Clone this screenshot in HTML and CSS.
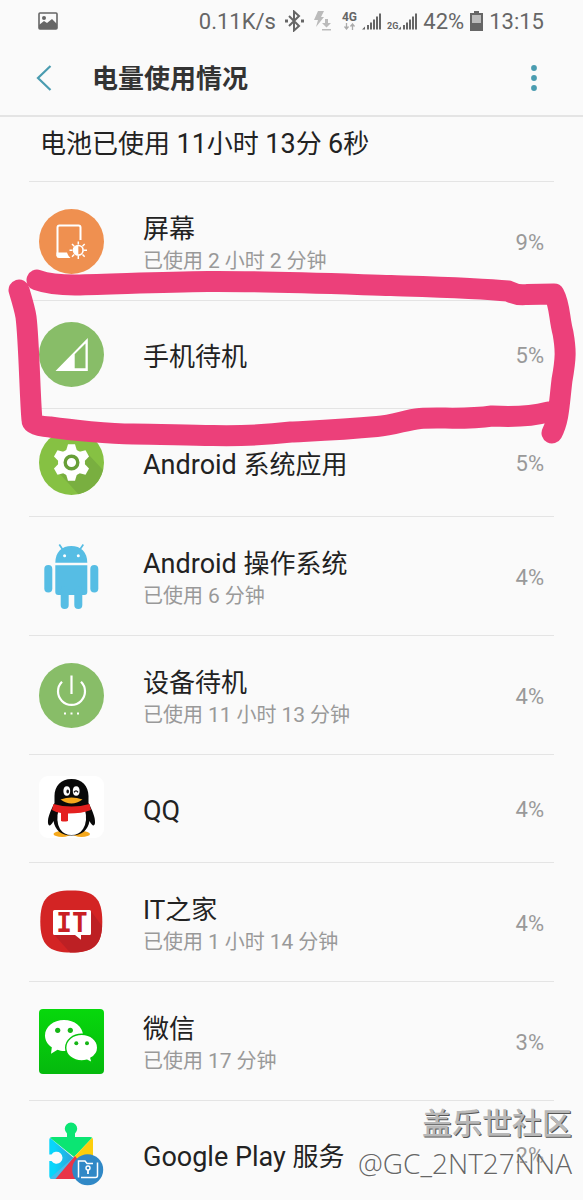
FILE: index.html
```html
<!DOCTYPE html>
<html lang="zh-CN">
<head>
<meta charset="utf-8">
<meta name="viewport" content="width=device-width, initial-scale=1">
<title>电量使用情况</title>
<link rel="stylesheet" href="styles.css">
</head>
<body>
<div class="screen">
  <div class="status">
    <svg class="status-photo" width="20" height="18" viewBox="0 0 20 18" aria-hidden="true"><rect x="1" y="1" width="18" height="16" rx="1" fill="none" stroke="#666" stroke-width="1.6"/><path d="M1 16V13L6 9 9 11 14 7 19 12V17H1Z" fill="#666"/><circle cx="6" cy="6" r="2" fill="#666"/></svg>
    <span class="status-text">0.11K/s</span>
    <svg class="status-bt" width="20" height="22" viewBox="0 0 20 22" aria-hidden="true"><path d="M5 6 15 16 10 20.500V1.500L15 6 5 16" fill="none" stroke="#666" stroke-width="2"/><path d="M1 9.500h3v3H1zM17 9.500h3v3h-3z" fill="#666"/></svg>
    <svg class="status-data" width="18" height="20" viewBox="0 0 18 20" aria-hidden="true"><path d="M4 0H10L7 6H10L2 16 4 9H0Z" fill="#bbb"/><path d="M11 8h3v4h3l-4.500 4.500L8 12h3zM8 18h9v1.500H8z" fill="#bbb"/></svg>
    <span class="net"><span class="net-label">4G</span><svg width="12" height="7" viewBox="0 0 12 7" aria-hidden="true"><path d="M2.500 0v6M.5 3.500l2 2.500 2-2.500M8.500 7V1M6.500 3.500l2-2.500 2 2.500" fill="none" stroke="#aaa" stroke-width="1.300"/></svg></span>
    <svg class="signal" width="20" height="18" viewBox="0 0 20 18" aria-hidden="true"><path d="M0 17.500 3 14.500V17.500ZM5 13h2v4.500H5zM8 10.500h2v7H8zM11 7.500h2v10h-2zM14 4.500h2v13h-2zM17 1.500h2v16h-2z" fill="#666"/></svg>
    <span class="net-small">2G</span>
    <svg class="signal-b" width="20" height="18" viewBox="0 0 20 18" aria-hidden="true"><path d="M0 17.500 3 14.500V17.500ZM5 13h2v4.500H5zM8 10.500h2v7H8zM11 7.500h2v10h-2zM14 4.500h2v13h-2zM17 1.500h2v16h-2z" fill="#666"/></svg>
    <span class="status-text">42%</span>
    <svg class="battery" width="13" height="20" viewBox="0 0 13 20" aria-hidden="true"><path d="M4 0h5v2h4v18H0V2h4z" fill="#666"/><path d="M2 4h9v8H2z" fill="#bbb"/></svg>
    <span class="status-text">13:15</span>
  </div>
  <header class="bar">
    <button class="back" type="button" aria-label="返回"><svg width="16" height="26" viewBox="0 0 16 26"><path d="M14.500 1 2 13 14.500 25" fill="none" stroke="#4a9cb0" stroke-width="2.200"/></svg></button>
    <h1 class="bar-title">电量使用情况</h1>
    <button class="more" type="button" aria-label="更多选项"><svg width="6" height="26" viewBox="0 0 6 26" fill="#4a9cb0"><circle cx="3" cy="3" r="2.900"/><circle cx="3" cy="13" r="2.900"/><circle cx="3" cy="23" r="2.900"/></svg></button>
  </header>
  <p class="summary">电池已使用 <span class="latin">11</span>小时 <span class="latin">13</span>分 <span class="latin">6</span>秒</p>
  <ul class="list">
    <li class="row row-tall">
      <svg class="icon" viewBox="0 0 65 65" aria-hidden="true"><circle cx="32.500" cy="32.500" r="32.500" fill="#ef9050"/><path d="M41.500 31V18.500a2 2 0 0 0-2-2H20.500a2 2 0 0 0-2 2V47" fill="none" stroke="#fff" stroke-width="2"/><path d="M17.500 43.500H28Q29 47 31.500 49H20a2.500 2.500 0 0 1-2.500-2.500Z" fill="#fff"/><circle cx="39.300" cy="41.300" r="4.800" fill="none" stroke="#fff" stroke-width="1.700"/><path d="M39.300 36.500a4.800 4.800 0 0 0 0 9.600Z" fill="#fff"/><path d="M39.300 32.500v3M39.300 47v3M30.500 41.300h3M45 41.300h3M33 35l2.200 2.200M43.500 45.500l2.200 2.200M45.700 35l-2.200 2.200M35.200 45.500 33 47.700" stroke="#fff" stroke-width="1.500"/></svg>
      <div class="info"><span class="name">屏幕</span><span class="used">已使用 <span class="num">2</span> 小时 <span class="num">2</span> 分钟</span></div><span class="pct">9%</span>
    </li>
    <li class="row">
      <svg class="icon" viewBox="0 0 65 65" aria-hidden="true"><circle cx="32.500" cy="32.500" r="32.500" fill="#88bd68"/><path fill-rule="evenodd" d="M16.500 49 48.800 16V49ZM35.700 32.300V46.300H46.500V21.500Z" fill="#fff"/></svg>
      <div class="info"><span class="name">手机待机</span></div><span class="pct">5%</span>
    </li>
    <li class="row">
      <svg class="icon" viewBox="0 0 65 65" aria-hidden="true"><circle cx="32.500" cy="32.500" r="32.500" fill="#86c143"/><path d="M20 43 39.500 64.200A32.500 32.500 0 0 0 64 40L49 24Z" fill="#79af40"/><g fill="#fff"><circle cx="32.500" cy="32.500" r="13.500"/><path id="tooth" d="M27 21 29 14.300H36L38 21Z"/><use href="#tooth" transform="rotate(60 32.500 32.500)"/><use href="#tooth" transform="rotate(120 32.500 32.500)"/><use href="#tooth" transform="rotate(180 32.500 32.500)"/><use href="#tooth" transform="rotate(240 32.500 32.500)"/><use href="#tooth" transform="rotate(300 32.500 32.500)"/></g><circle cx="32.500" cy="32.500" r="6.300" fill="none" stroke="#689f38" stroke-width="3.400"/></svg>
      <div class="info"><span class="name"><span class="latin">Android </span>系统应用</span></div><span class="pct">5%</span>
    </li>
    <li class="row row-tall">
      <svg class="icon" viewBox="0 0 65 65" fill="#56bde4" aria-hidden="true"><path d="M16.300 18.700C16.300 8 23 2 32.300 2s16 6 16 16.700Z"/><path d="M20.300.500 24 6M44.300.500 40.600 6" stroke="#56bde4" stroke-width="1.700"/><path d="M16.300 21.300h32V48a3 3 0 0 1-3 3h-26a3 3 0 0 1-3-3Z"/><rect x="5.300" y="21" width="8" height="27.500" rx="4"/><rect x="51.300" y="21" width="8" height="27.500" rx="4"/><rect x="21.700" y="42" width="8" height="23" rx="4"/><rect x="35.300" y="42" width="8" height="23" rx="4"/><circle cx="25.600" cy="11.700" r="1.500" fill="#fff"/><circle cx="39.300" cy="11.700" r="1.500" fill="#fff"/></svg>
      <div class="info"><span class="name"><span class="latin">Android </span>操作系统</span><span class="used">已使用 <span class="num">6</span> 分钟</span></div><span class="pct">4%</span>
    </li>
    <li class="row row-tall">
      <svg class="icon" viewBox="0 0 65 65" aria-hidden="true"><circle cx="32.500" cy="32.500" r="32.500" fill="#88bd68"/><path d="M23 18.800a13.500 13.500 0 1 0 19 0M32.500 12.500V31" fill="none" stroke="#fff" stroke-width="2.200"/><path d="M25 49.500h2v2h-2zM31.500 49.500h2v2h-2zM38 49.500h2v2h-2z" fill="#fff"/></svg>
      <div class="info"><span class="name">设备待机</span><span class="used">已使用 <span class="num">11</span> 小时 <span class="num">13</span> 分钟</span></div><span class="pct">4%</span>
    </li>
    <li class="row">
      <svg class="icon" viewBox="0 0 65 65" aria-hidden="true"><rect y="0" width="65" height="62" rx="9" fill="#fff"/><ellipse cx="23" cy="58" rx="8.500" ry="3" fill="#f5a81c"/><ellipse cx="42.500" cy="58" rx="8.500" ry="3" fill="#f5a81c"/><path d="M32.500 3C22 3 15.500 10 15.500 20v7C12 34 8.500 41 9 47c.5 4 3 3 5.500-2C16 54 22 59.500 32.500 59.500S49 54 50.500 45c2.500 5 5 6 5.500 2 .5-6-3-13-6.500-20v-7C49.500 10 43 3 32.500 3Z" fill="#090909"/><path d="M19.500 34H46Q49 45 44 53 40 59 32.500 59T21 53Q16.500 45 19.500 34Z" fill="#fff"/><path d="M14.500 28q18 5 36 0l1.500 6q-9 3.500-23 3.500V45q-4 1-7 0V37q-5-.5-9-3Z" fill="#e4201f"/><ellipse cx="27.800" cy="15" rx="3.400" ry="4.700" fill="#fff"/><ellipse cx="37.200" cy="15" rx="3.400" ry="4.700" fill="#fff"/><ellipse cx="28.700" cy="15.500" rx="1.300" ry="2" fill="#111"/><path d="M35 16.300q2-3 4 0" fill="none" stroke="#111" stroke-width="1.300"/><path d="M21.500 23.500Q32.500 19.500 43.500 23.500 38 27.500 32.500 27.500T21.500 23.500Z" fill="#f5a81c"/></svg>
      <div class="info"><span class="name"><span class="latin">QQ</span></span></div><span class="pct">4%</span>
    </li>
    <li class="row row-tall">
      <svg class="icon" viewBox="0 0 65 65" aria-hidden="true"><path d="M32.300.500C55 .500 63.300 8 63.300 31.500S55 62.500 32.300 62.500 1.300 55 1.300 31.500 9.500.500 32.300.500Z" fill="#d32424"/><path d="M15 44.500 31 62.500C54 62.500 62.500 55 63 36L52 21Z" fill="#bd2024"/><path d="M15.500 20H50.500a1.500 1.500 0 0 1 1.500 1.500V43.500a1.500 1.500 0 0 1-1.500 1.500H42V49.700L36 45H15.500a1.500 1.500 0 0 1-1.500-1.500V21.500A1.500 1.500 0 0 1 15.500 20Z" fill="#fff"/><text class="it-text" x="33" y="42" text-anchor="middle">IT</text></svg>
      <div class="info"><span class="name">IT之家</span><span class="used">已使用 <span class="num">1</span> 小时 <span class="num">14</span> 分钟</span></div><span class="pct">4%</span>
    </li>
    <li class="row row-tall">
      <svg class="icon" viewBox="0 0 65 65" aria-hidden="true"><defs><linearGradient id="wx" x2="0" y2="1"><stop stop-color="#07d80c"/><stop offset="1" stop-color="#05b90d"/></linearGradient></defs><rect width="65" height="65" rx="4" fill="url(#wx)"/><path d="M25 11C14.500 11 6 17.800 6 26.500c0 5 2.700 9 6.800 11.800L12 44.700l6.500-4c2 .8 4.200 1.300 6.500 1.300 10.500 0 19-6.800 19-15.500S35.500 11 25 11Z" fill="#fff"/><path d="M42.700 25.300c-9 0-16 6-16 13.400s7 13.300 16 13.300c2 0 3.600-.3 5.300-.8l5.200 2.600-1.300-4.600c4.200-2.500 6.800-6.300 6.800-10.500 0-7.400-7-13.400-16-13.400Z" fill="#fff" stroke="#06c40c" stroke-width="1.400"/><g fill="#16b516"><circle cx="18.700" cy="21.300" r="2.600"/><circle cx="31.300" cy="21.300" r="2.600"/><circle cx="37.300" cy="34.300" r="2"/><circle cx="48" cy="34.300" r="2"/></g></svg>
      <div class="info"><span class="name">微信</span><span class="used">已使用 <span class="num">17</span> 分钟</span></div><span class="pct">3%</span>
    </li>
    <li class="row">
      <svg class="icon" viewBox="0 0 65 65" aria-hidden="true"><defs><linearGradient id="gp" x2="1" y2="0"><stop offset=".2" stop-color="#08d5fb"/><stop offset="1" stop-color="#329bd6"/></linearGradient><clipPath id="piece"><rect x="10.300" y="15" width="43.700" height="42" rx="3"/></clipPath></defs><g clip-path="url(#piece)"><path d="M10 15 36 37 17 57H10Z" fill="url(#gp)"/><path d="M10 15H54L35 35Z" fill="#0be573"/><path d="M10 57 36 34 17 57Z" fill="#48bbea"/><path d="M54 15V57L35 35Z" fill="#fdce0b"/><path d="M16.500 57 36 34 54 57Z" fill="#e93548"/></g><path d="M28 16V11.500a6.200 6.200 0 1 1 8 0V16Z" fill="#0be573"/><path d="M10 32.500h2.500a6 6 0 1 1 0 6.500H10Z" fill="#fafafa"/><circle cx="48.700" cy="47.700" r="15.500" fill="#3088c6"/><path d="M39.500 55.500V39h6.500l2 2.500h6M58.500 40.500v13q0 2-2 2H42" fill="none" stroke="#fff" stroke-width="1.500"/><circle cx="49" cy="46" r="2" fill="none" stroke="#fff" stroke-width="1.400"/><path d="M49 48v4" stroke="#fff" stroke-width="1.800"/></svg>
      <div class="info"><span class="name"><span class="latin">Google Play </span>服务</span></div><span class="pct">2%</span>
    </li>
  </ul>
  <svg class="marker" viewBox="0 0 583 190" aria-hidden="true"><path d="M37 20C48 24 60 25 75 25C120 24 160 22 208 21.500S340 24 391 25.500C440 27 480 28 508 31Q518 36 527 34.500L554 34C560 45 559 58 563 73C566 90 566 98 562 120C559 145 559 160 552 173M548 152C530 157 510 157 492 156C465 160 440 157 420 158.500C405 160 395 165 377 166.500C340 170 310 171 291 172C265 175 235 176 213 175.500C180 175 155 174 133 174C110 174 70 170 50 167Q32 166 32 160C30 140 29 80 26 57C25 50 22 40 19 30"/></svg>
  <div class="watermark"><span class="wm-site">盖乐世社区</span><span class="wm-user">@GC_2NT27NNA</span></div>
</div>
</body>
</html>
```
FILE: styles.css
```css
* { box-sizing: border-box; }
body {
  margin: 0;
  background: #fafafa;
  color: #222;
  font-family: Roboto, "Noto Sans CJK SC", sans-serif;
}
.screen {
  position: relative;
  height: 100vh;
  overflow: hidden;
}
.status {
  display: flex;
  align-items: center;
  height: 41px;
  padding: 0 39px 0 38px;
  color: #666;
}
.status-photo { margin-right: auto; }
.status-text { padding-top: 2px; font-size: 22px; line-height: 38px; white-space: nowrap; }
.status-bt { margin: 0 10px 0 8px; }
.net {
  display: flex;
  flex-direction: column;
  align-items: center;
  margin: 0 5px 0 10px;
}
.net-label { font-size: 12px; font-weight: 700; line-height: 12px; }
.net-small { align-self: flex-end; margin-left: 5px; font-size: 9px; font-weight: 700; line-height: 30px; }
.signal-b { margin-right: 5px; }
.battery { margin: 0 6px; }
.bar {
  display: flex;
  align-items: center;
  height: 76px;
  padding: 0 38px 0 28px;
  border-bottom: 2px solid #e4e4e4;
}
.back, .more {
  display: flex;
  padding: 8px;
  border: 0;
  background: none;
}
.bar-title {
  flex: 1;
  margin: 0 0 0 32px;
  padding-top: 2px;
  color: #333;
  font-size: 26px;
  font-weight: 700;
  line-height: 36px;
}
.summary {
  height: 64px;
  margin: 0;
  padding: 8px 40px;
  font-size: 26px;
  line-height: 38px;
}
.list {
  margin: 0 29px;
  padding: 0;
  border-top: 1px solid #e4e4e4;
  list-style: none;
}
.row {
  display: flex;
  align-items: center;
  height: 108px;
  padding: 0 10px;
  border-bottom: 1px solid #e4e4e4;
}
.row-tall { height: 119px; }
.icon { flex: none; width: 65px; height: 65px; }
.info {
  display: flex;
  flex: 1;
  flex-direction: column;
  margin-left: 39px;
  padding-top: 4px;
}
.name { font-size: 26px; line-height: 36px; white-space: pre; }
.latin { font-size: 27px; line-height: 1; }
.used { color: #999; font-size: 20px; line-height: 28px; }
.num { font-size: 21px; line-height: 1; }
.pct { padding-top: 2px; color: #999; font-size: 22px; }
.it-text { fill: #c92024; font: 700 26px "DejaVu Sans Mono", monospace; }
.marker {
  position: absolute;
  top: 260px;
  left: 0;
  width: 100%;
  fill: none;
  stroke: #ec407a;
  stroke-width: 21px;
  stroke-linecap: round;
  stroke-linejoin: round;
}
.watermark {
  position: absolute;
  right: 11px;
  bottom: 18px;
  display: flex;
  flex-direction: column;
  align-items: flex-end;
}
.wm-site {
  color: #b8b8b8;
  font-size: 30px;
  font-weight: 500;
  line-height: 40px;
  text-shadow: 1px 1px 0 #555;
}
.wm-user {
  color: #666;
  font-family: "Open Sans", "Noto Sans", sans-serif;
  font-size: 28px;
  font-weight: 300;
  line-height: 38px;
  text-shadow: 1px 1px 0 #fff;
}
```
